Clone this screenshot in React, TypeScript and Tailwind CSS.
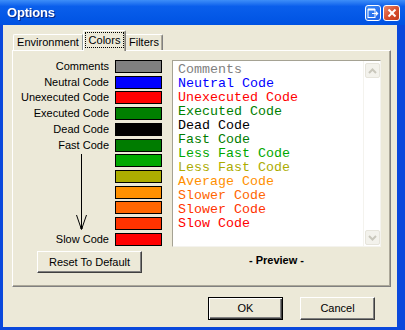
import React from 'react';

const swatches = [
  { label: 'Comments', bg: 'bg-[#808080]' },
  { label: 'Neutral Code', bg: 'bg-[#0000ff]' },
  { label: 'Unexecuted Code', bg: 'bg-[#ff0000]' },
  { label: 'Executed Code', bg: 'bg-[#008000]' },
  { label: 'Dead Code', bg: 'bg-[#000000]' },
  { label: 'Fast Code', bg: 'bg-[#007c00]' },
  { label: '', bg: 'bg-[#00a800]' },
  { label: '', bg: 'bg-[#acac00]' },
  { label: '', bg: 'bg-[#ff9000]' },
  { label: '', bg: 'bg-[#ff6600]' },
  { label: '', bg: 'bg-[#ff3300]' },
  { label: 'Slow Code', bg: 'bg-[#ff0000]' },
];

const preview = [
  { text: 'Comments', color: 'text-[#808080]' },
  { text: 'Neutral Code', color: 'text-[#0000ff]' },
  { text: 'Unexecuted Code', color: 'text-[#ff0000]' },
  { text: 'Executed Code', color: 'text-[#008000]' },
  { text: 'Dead Code', color: 'text-[#000000]' },
  { text: 'Fast Code', color: 'text-[#007c00]' },
  { text: 'Less Fast Code', color: 'text-[#00a800]' },
  { text: 'Less Fast Code', color: 'text-[#acac00]' },
  { text: 'Average Code', color: 'text-[#ff9000]' },
  { text: 'Slower Code', color: 'text-[#ff6600]' },
  { text: 'Slower Code', color: 'text-[#ff3300]' },
  { text: 'Slow Code', color: 'text-[#ff0000]' },
];

function Arrow() {
  return (
    <svg width="12" height="77" viewBox="0 0 12 77" className="justify-self-end mr-[21px]">
      <line x1="5.5" y1="0" x2="5.5" y2="75" stroke="#000" strokeWidth="1" />
      <polyline points="0.5,61 5.5,75.5 10.5,61" fill="none" stroke="#000" strokeWidth="1" />
      <rect x="4.5" y="73" width="2" height="2" fill="#000" />
    </svg>
  );
}

function ScrollBtn({ up }: { up?: boolean }) {
  return (
    <div className="w-[15px] h-[15px] ml-[1px] rounded-[2px] border border-[#e6e4db] bg-[#f3f2ec] flex items-center justify-center">
      <svg width="9" height="6" viewBox="0 0 9 6">
        <polyline
          points={up ? '1,5 4.5,1.5 8,5' : '1,1 4.5,4.5 8,1'}
          fill="none"
          stroke="#c9c7bc"
          strokeWidth="2"
        />
      </svg>
    </div>
  );
}

export default function App() {
  return (
    <div className="w-[405px] h-[330px] flex flex-col bg-[#0a48dc] font-['Liberation_Sans',Arial,sans-serif] text-[11px] text-black select-none">
      {/* Title bar */}
      <div className="h-[25px] flex items-center pl-[7px] pr-[5px] bg-gradient-to-b from-[#3d8ef8] via-[#0a5fec] via-25% to-[#0052e2]">
        <span className="text-white font-bold text-[13px] tracking-[-0.2px] drop-shadow-[1px_1px_0_#0a2a8a]">Options</span>
        <div className="ml-auto flex gap-[2px] mt-[1px]">
          <div className="w-[16px] h-[16px] rounded-[3px] border border-white bg-gradient-to-br from-[#3f8cf6] to-[#1c5ee8] flex items-center justify-center">
            <svg width="12" height="11" viewBox="0 0 12 11">
              <rect x="1" y="1.5" width="7" height="8" fill="none" stroke="#fff" strokeWidth="1" />
              <line x1="1" y1="1.5" x2="8" y2="1.5" stroke="#fff" strokeWidth="2" />
              <line x1="5" y1="5.5" x2="10" y2="5.5" stroke="#fff" strokeWidth="1" />
              <polygon points="9,3 11.5,5.5 9,8" fill="#fff" />
            </svg>
          </div>
          <div className="w-[17px] h-[16px] rounded-[3px] border border-white bg-gradient-to-br from-[#e8866a] via-[#d8512f] to-[#c2381b] flex items-center justify-center">
            <svg width="10" height="10" viewBox="0 0 10 10">
              <line x1="1.5" y1="1.5" x2="8.5" y2="8.5" stroke="#fff" strokeWidth="2" />
              <line x1="8.5" y1="1.5" x2="1.5" y2="8.5" stroke="#fff" strokeWidth="2" />
            </svg>
          </div>
        </div>
      </div>

      {/* Window body */}
      <div className="flex-1 flex pl-[3px] pr-[8px] pb-[3px]">
        <div className="flex-1 bg-[#ece9d8] pt-[5px] pl-[9px] pr-[6px] flex flex-col">
          {/* Tabs */}
          <div className="h-[20px] flex items-end pl-[1px]">
            <div className="w-[70px] h-[16px] border-t border-l border-white border-r border-r-[#919b9c] rounded-tl-[2px] flex items-center justify-center">
              Environment
            </div>
            <div className="relative z-10 w-[43px] h-[21px] -mb-[1px] bg-[#ece9d8] border-t border-l border-white border-r border-r-[#808080] shadow-[inset_-1px_0_#aca899] rounded-t-[2px] pt-[1px] px-[1px]">
              <div className="h-[16px] border border-dotted border-black flex items-center justify-center">
                Colors
              </div>
            </div>
            <div className="w-[37px] h-[16px] border-t border-white border-r border-r-[#808080] shadow-[inset_-1px_0_#aca899] rounded-tr-[2px] flex items-center justify-center">
              Filters
            </div>
          </div>

          {/* Panel */}
          <div className="w-[379px] h-[237px] border border-white border-r-[#808080] border-b-[#808080] shadow-[inset_-1px_-1px_#aca899] flex pt-[9px]">
            {/* Left: colour swatches */}
            <div className="flex flex-col w-[149px]">
              <div className="grid grid-cols-[96px_47px] auto-rows-[13px] gap-x-[6px] gap-y-[2.73px]">
                {swatches.map((s, i) => (
                  <React.Fragment key={i}>
                    {i === 6 && (
                      <div className="row-span-5 flex justify-end">
                        <Arrow />
                      </div>
                    )}
                    {s.label && (
                      <div className="text-right leading-[13px] whitespace-nowrap">{s.label}</div>
                    )}
                    <div className={`col-start-2 h-[13px] border border-black ${s.bg}`} />
                  </React.Fragment>
                ))}
              </div>
              <button className="mt-[5px] ml-[24px] w-[105px] h-[22px] bg-[#ece9d8] border border-white border-r-[#404040] border-b-[#404040] shadow-[inset_-1px_-1px_#808080] flex items-center justify-center">
                Reset To Default
              </button>
            </div>

            {/* Right: preview */}
            <div className="ml-[10px] flex flex-col items-center">
              <div className="w-[209px] h-[187px] flex bg-white border border-[#a5a293] border-r-[#f4f3ee] border-b-[#f4f3ee]">
                <div className="flex-1 pl-[5px] pt-[2px] font-['Liberation_Mono','Courier_New',monospace] text-[13.33px] leading-[14px] whitespace-pre">
                  {preview.map((p, i) => (
                    <div key={i} className={p.color}>
                      {p.text}
                    </div>
                  ))}
                </div>
                <div className="w-[17px] flex flex-col justify-between pt-[2px] pb-[1px] border-l border-[#f4f3ee]">
                  <ScrollBtn up />
                  <ScrollBtn />
                </div>
              </div>
              <div className="mt-[7px] font-bold leading-[13px]">- Preview -</div>
            </div>
          </div>

          {/* Buttons */}
          <div className="mt-[10px] flex justify-end gap-[17px] pr-[16px]">
            <button className="w-[75px] h-[23px] bg-[#ece9d8] border border-black shadow-[inset_1px_1px_#fff,inset_-1px_-1px_#404040,inset_-2px_-2px_#808080] flex items-center justify-center">
              OK
            </button>
            <button className="w-[75px] h-[23px] bg-[#ece9d8] border border-white border-r-[#404040] border-b-[#404040] shadow-[inset_-1px_-1px_#808080] flex items-center justify-center">
              Cancel
            </button>
          </div>
        </div>
      </div>
    </div>
  );
}
